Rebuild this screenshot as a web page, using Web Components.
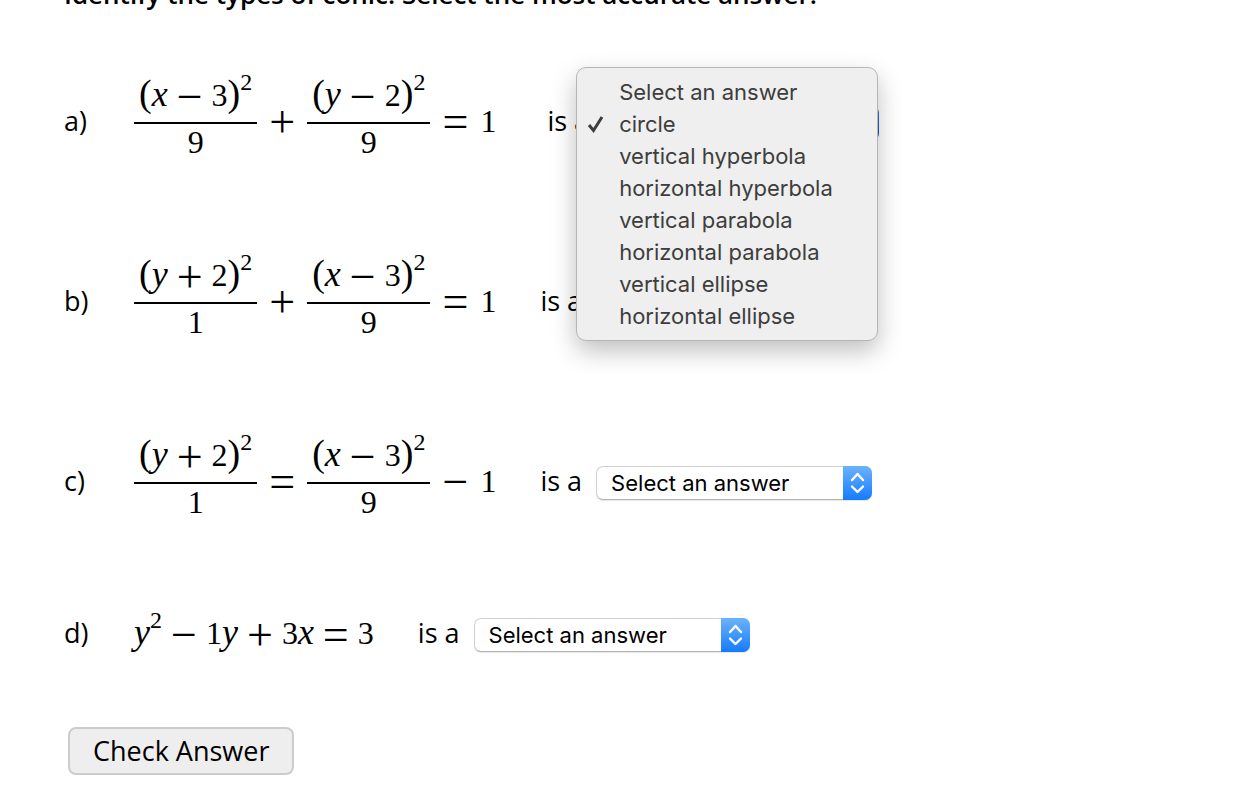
<!DOCTYPE html>
<html lang="en">
<head>
    <meta charset="UTF-8">
    <meta name="viewport" content="width=device-width, initial-scale=1.0">
    <title>Types of Conic</title>
    <style>
        body {
            margin: 0;
            background-color: #FFFFFF;
            color: #000000;
            font-family: "Trebuchet MS", "Open Sans", sans-serif;
            font-size: 27px;
            font-weight: 500;
            line-height: 30px;
        }
        /* parts of an equation */
        i {
            font-size: 36px;
            line-height: 1px;
        }
        sup {
            font-size: 24px;
            line-height: 1px;
            vertical-align: 16px;
        }
    </style>
</head>
<body>
    <conic-quiz>
        <span slot="title">Identify the types of conic. Select the most accurate answer.</span>

        <conic-question>
            <span slot="letter">a)</span>
            <math-frac slot="equation">
                <math-paren>(</math-paren><i>x</i><math-op>−</math-op>3<math-paren>)</math-paren><sup>2</sup>
                <span slot="bottom">9</span>
            </math-frac>
            <math-op slot="equation">+</math-op>
            <math-frac slot="equation">
                <math-paren>(</math-paren><i>y</i><math-op>−</math-op>2<math-paren>)</math-paren><sup>2</sup>
                <span slot="bottom">9</span>
            </math-frac>
            <math-op slot="equation">=</math-op>
            <span slot="equation">1</span>
            <answer-select value="circle" open>&nbsp;is a</answer-select>
        </conic-question>

        <conic-question>
            <span slot="letter">b)</span>
            <math-frac slot="equation">
                <math-paren>(</math-paren><i>y</i><math-op>+</math-op>2<math-paren>)</math-paren><sup>2</sup>
                <span slot="bottom">1</span>
            </math-frac>
            <math-op slot="equation">+</math-op>
            <math-frac slot="equation">
                <math-paren>(</math-paren><i>x</i><math-op>−</math-op>3<math-paren>)</math-paren><sup>2</sup>
                <span slot="bottom">9</span>
            </math-frac>
            <math-op slot="equation">=</math-op>
            <span slot="equation">1</span>
            <answer-select>is a</answer-select>
        </conic-question>

        <conic-question>
            <span slot="letter">c)</span>
            <math-frac slot="equation">
                <math-paren>(</math-paren><i>y</i><math-op>+</math-op>2<math-paren>)</math-paren><sup>2</sup>
                <span slot="bottom">1</span>
            </math-frac>
            <math-op slot="equation">=</math-op>
            <math-frac slot="equation">
                <math-paren>(</math-paren><i>x</i><math-op>−</math-op>3<math-paren>)</math-paren><sup>2</sup>
                <span slot="bottom">9</span>
            </math-frac>
            <math-op slot="equation">−</math-op>
            <span slot="equation">1</span>
            <answer-select>is a</answer-select>
        </conic-question>

        <conic-question>
            <span slot="letter">d)</span>
            <span slot="equation"><i>y</i><sup>2</sup><math-op>−</math-op>1<i>y</i><math-op>+</math-op>3<i>x</i><math-op>=</math-op>3</span>
            <answer-select>is a</answer-select>
        </conic-question>

        <check-button slot="footer">Check Answer</check-button>
    </conic-quiz>

    <script>
        const ANSWERS = [
            'Select an answer',
            'circle',
            'vertical hyperbola',
            'horizontal hyperbola',
            'vertical parabola',
            'horizontal parabola',
            'vertical ellipse',
            'horizontal ellipse'
        ];

        class ConicQuiz extends HTMLElement {
            constructor() {
                super();
                this.attachShadow({ mode: 'open' }).innerHTML = `
                    <style>
                        :host {
                            display: block;
                            padding: 0 64px 20px;
                        }
                        /* the page is scrolled, only the foot of the heading shows */
                        h1 {
                            margin: -24px 0 65px;
                            font-size: 26px;
                            font-weight: 650;
                            line-height: 36px;
                            white-space: nowrap;
                        }
                        .questions {
                            display: flex;
                            flex-direction: column;
                            gap: 88px;
                        }
                        .footer {
                            padding: 74px 4px 0;
                        }
                    </style>
                    <h1><slot name="title"></slot></h1>
                    <div class="questions"><slot></slot></div>
                    <div class="footer"><slot name="footer"></slot></div>
                `;
            }
        }

        class ConicQuestion extends HTMLElement {
            constructor() {
                super();
                this.attachShadow({ mode: 'open' }).innerHTML = `
                    <style>
                        :host {
                            display: flex;
                            align-items: center;
                        }
                        .letter {
                            width: 70px;
                            padding-bottom: 4px;
                        }
                        .equation {
                            display: flex;
                            align-items: center;
                            gap: 3px;
                            margin-right: 44px;
                            font-family: "Liberation Serif", serif;
                            font-size: 32px;
                            font-weight: 400;
                            line-height: 32px;
                            white-space: nowrap;
                        }
                        ::slotted(span[slot="equation"]) {
                            padding-bottom: 4px;
                        }
                    </style>
                    <div class="letter"><slot name="letter"></slot></div>
                    <div class="equation"><slot name="equation"></slot></div>
                    <slot></slot>
                `;
            }
        }

        class MathFrac extends HTMLElement {
            constructor() {
                super();
                this.attachShadow({ mode: 'open' }).innerHTML = `
                    <style>
                        :host {
                            display: flex;
                            flex-direction: column;
                            text-align: center;
                            line-height: 36px;
                        }
                        .top {
                            padding: 0 5px 9px;
                            border-bottom: 2px solid #000000;
                        }
                        .bottom {
                            padding-bottom: 9px;
                        }
                    </style>
                    <div class="top"><slot></slot></div>
                    <div class="bottom"><slot name="bottom"></slot></div>
                `;
            }
        }

        class MathOp extends HTMLElement {
            constructor() {
                super();
                this.attachShadow({ mode: 'open' }).innerHTML = `
                    <style>
                        :host {
                            display: inline-block;
                            padding: 0 9px;
                            font-size: 46px;
                            line-height: 1px;
                            vertical-align: -6px;
                        }
                        :host([slot]) {
                            padding-bottom: 4px;
                        }
                    </style>
                    <slot></slot>
                `;
            }
        }

        class MathParen extends HTMLElement {
            constructor() {
                super();
                this.attachShadow({ mode: 'open' }).innerHTML = `<style>
                        :host {
                            display: inline;
                            font-size: 38px;
                            line-height: 1px;
                        }
                    </style><slot></slot>`;
            }
        }

        class AnswerSelect extends HTMLElement {
            constructor() {
                super();
                this.attachShadow({ mode: 'open' }).innerHTML = `
                    <style>
                        :host {
                            display: flex;
                            align-items: center;
                            gap: 14px;
                            white-space: nowrap;
                        }
                        label {
                            padding-bottom: 4px;
                        }
                        .box {
                            position: relative;
                            width: 276px;
                            font-family: Inter, sans-serif;
                            font-size: 22px;
                            font-weight: 400;
                        }
                        select {
                            display: block;
                            box-sizing: border-box;
                            width: 100%;
                            height: 34px;
                            padding: 0 36px 0 14px;
                            appearance: none;
                            border: 1px solid #D0D0D0;
                            border-bottom-color: #B4B4B4;
                            border-radius: 7px;
                            outline: none;
                            background-color: #FFFFFF;
                            box-shadow: 0 1px 1px rgba(0, 0, 0, 0.1);
                            color: #000000;
                            font: inherit;
                        }
                        .cap {
                            position: absolute;
                            top: 0;
                            right: 0;
                            width: 29px;
                            height: 34px;
                            border-radius: 0 7px 7px 0;
                            background-image: linear-gradient(#6CB3FA, #147BFE);
                            pointer-events: none;
                        }
                        :host([open]) .cap {
                            background-image: linear-gradient(#3F7FD8, #0A4FC4);
                        }
                        ul {
                            display: none;
                            position: absolute;
                            z-index: 1;
                            top: -39px;
                            left: -27px;
                            box-sizing: border-box;
                            width: 302px;
                            margin: 0;
                            padding: 8px 0;
                            border: 1px solid #B5B5B5;
                            border-radius: 10px;
                            background-color: #EFEFEF;
                            box-shadow: 0 10px 24px rgba(0, 0, 0, 0.25);
                            color: #3D3D3D;
                            line-height: 32px;
                            list-style: none;
                        }
                        :host([open]) ul {
                            display: block;
                        }
                        li {
                            display: flex;
                            align-items: center;
                        }
                        li svg {
                            width: 18px;
                            height: 20px;
                            margin: 0 14px 0 10px;
                            visibility: hidden;
                        }
                        li[aria-selected="true"] svg {
                            visibility: visible;
                        }
                    </style>
                    <label for="answer"><slot></slot></label>
                    <div class="box">
                        <select id="answer"></select>
                        <svg class="cap" viewBox="0 0 29 34" fill="none" stroke="#FFFFFF" stroke-width="2.4" stroke-linecap="round" stroke-linejoin="round">
                            <path d="M9 14L14.5 8L20 14M9 20.500L14.500 26L20 20.500"/>
                        </svg>
                        <ul role="listbox"></ul>
                    </div>
                `;
            }

            connectedCallback() {
                this.select = this.shadowRoot.querySelector('select');
                this.select.innerHTML = ANSWERS.map(answer => `<option>${answer}</option>`).join('');
                this.select.value = this.getAttribute('value') || ANSWERS[0];

                if (this.hasAttribute('open')) {
                    this.renderMenu();
                }
            }

            renderMenu() {
                const menu = this.shadowRoot.querySelector('ul');
                menu.innerHTML = ANSWERS.map(answer => `
                    <li role="option" aria-selected="${answer === this.select.value}">
                        <svg viewBox="0 0 18 20" fill="none" stroke="#3D3D3D" stroke-width="3"><path d="M2 11L6.500 16.500L15 3"/></svg>
                        <span>${answer}</span>
                    </li>
                `).join('');
                menu.querySelectorAll('li').forEach((item, index) => {
                    item.addEventListener('click', () => {
                        this.select.value = ANSWERS[index];
                        this.removeAttribute('open');
                    });
                });
            }
        }

        class CheckButton extends HTMLElement {
            constructor() {
                super();
                this.attachShadow({ mode: 'open' }).innerHTML = `
                    <style>
                        :host {
                            display: inline-block;
                        }
                        button {
                            display: block;
                            height: 48px;
                            padding: 0 23px;
                            border: 2px solid #CCCCCC;
                            border-radius: 8px;
                            background-color: #EEEEEE;
                            color: #000000;
                            font: inherit;
                        }
                    </style>
                    <button type="button"><slot></slot></button>
                `;
            }
        }

        customElements.define('math-op', MathOp);
        customElements.define('math-paren', MathParen);
        customElements.define('math-frac', MathFrac);
        customElements.define('answer-select', AnswerSelect);
        customElements.define('check-button', CheckButton);
        customElements.define('conic-question', ConicQuestion);
        customElements.define('conic-quiz', ConicQuiz);
    </script>
</body>
</html>
